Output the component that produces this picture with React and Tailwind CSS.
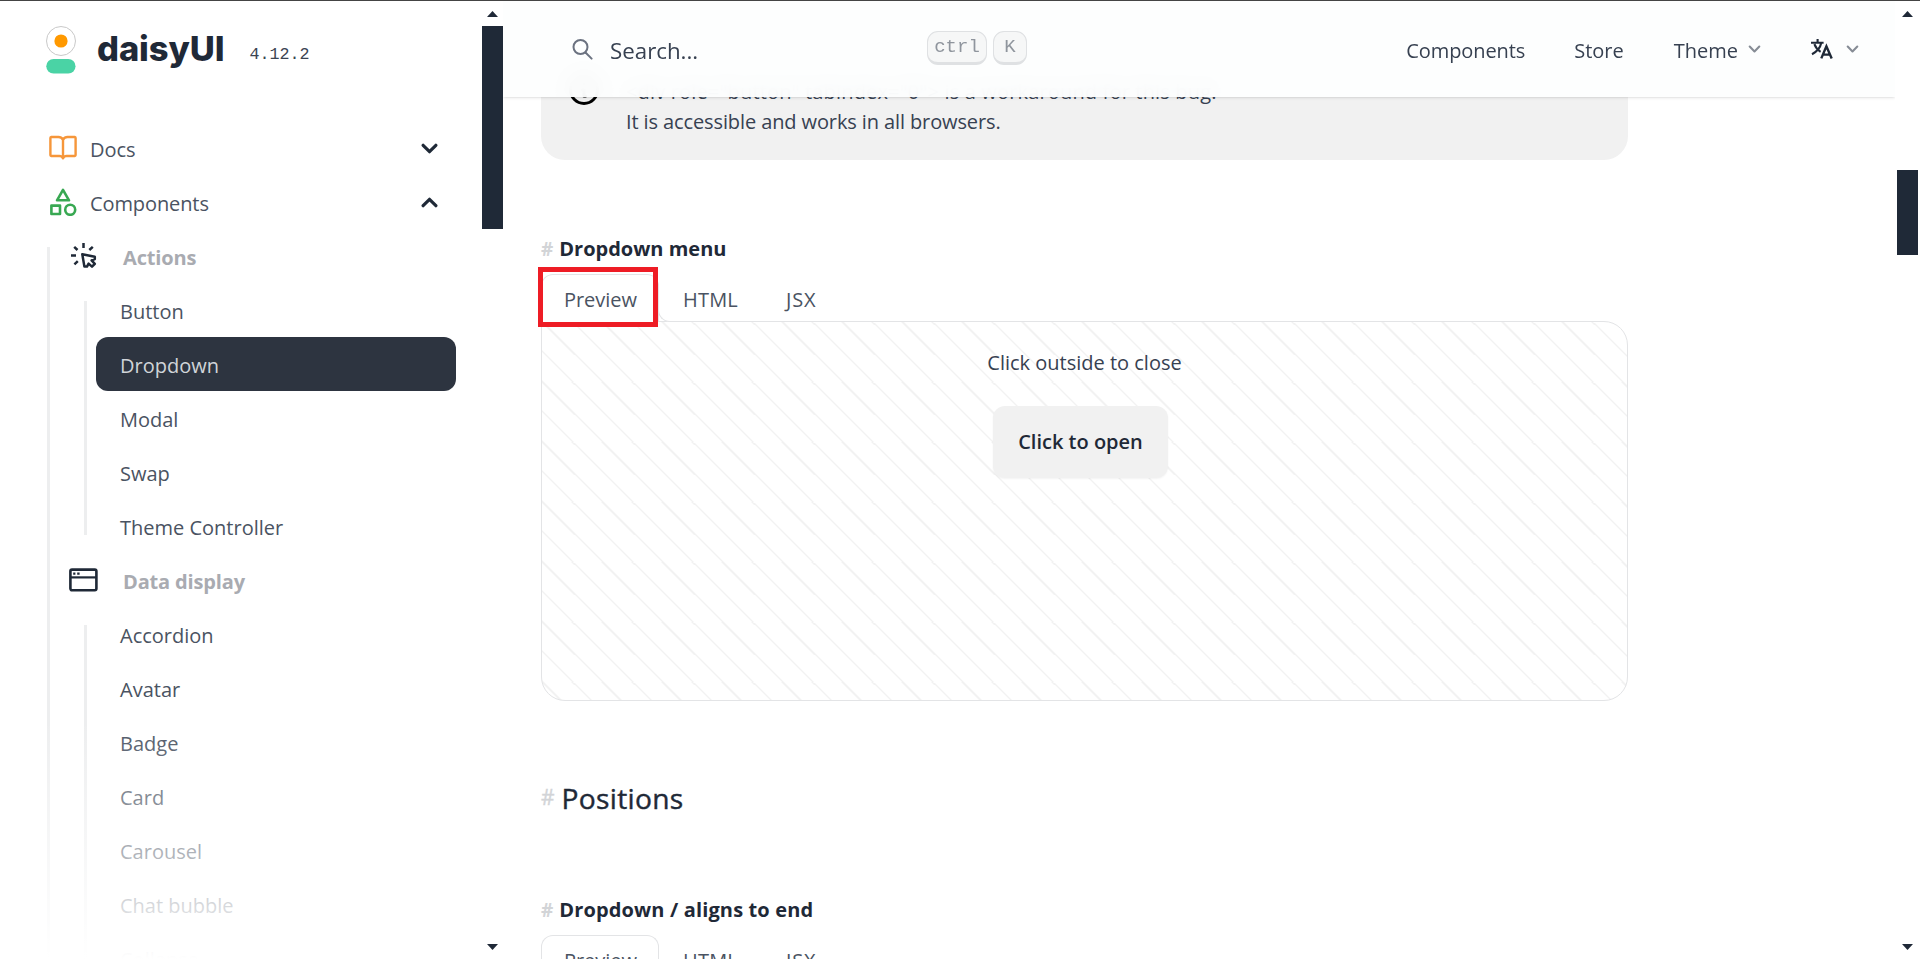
import React from "react";

function Chevron({ className, flip = false }) {
  return (
    <svg className={className} viewBox="0 0 16 10" fill="none" stroke="currentColor" strokeLinecap="round" strokeLinejoin="round">
      <path d={flip ? "M2 8L8 2L14 8" : "M2 2L8 8L14 2"} />
    </svg>
  );
}

function ScrollColumn({ width, thumb }) {
  return (
    <div className={`relative flex shrink-0 flex-col items-center ${width}`}>
      <svg className="mt-[10px] h-[6px] w-[11px] shrink-0" viewBox="0 0 11 6" fill="#1f2937">
        <path d="M5.5 0L11 6H0Z" />
      </svg>
      <div className={`w-[21px] shrink-0 bg-[#1f2937] ${thumb}`} />
      <svg className="mt-auto mb-[9px] h-[6px] w-[11px] shrink-0" viewBox="0 0 11 6" fill="#1f2937">
        <path d="M0 0H11L5.5 6Z" />
      </svg>
    </div>
  );
}

function Logo() {
  return (
    <svg className="h-[50px] w-[32px] shrink-0" viewBox="0 0 32 50">
      <circle cx="16" cy="16" r="14.5" fill="#fff" stroke="#c9c9c9" strokeWidth="1" />
      <circle cx="16" cy="16" r="6.6" fill="#ff9900" />
      <rect x="1.3" y="34" width="29.2" height="14.5" rx="7.25" fill="#4ad3a5" />
    </svg>
  );
}

function BookIcon() {
  return (
    <svg className="h-[26px] w-[28px]" viewBox="0 0 28 26" fill="none" stroke="#f6963a" strokeWidth="2.4" strokeLinecap="round" strokeLinejoin="round">
      <path d="M14 4.5C13 3 11.5 2 9.5 2H2.2A.9.9 0 0 0 1.4 2.9V20.2A.9.9 0 0 0 2.2 21H10.5C12.2 21 13.4 21.8 14 23.2C14.6 21.8 15.8 21 17.5 21H25.8A.9.9 0 0 0 26.6 20.2V2.9A.9.9 0 0 0 25.8 2H18.5C16.5 2 15 3 14 4.5Z" />
      <path d="M14 4.5V23" />
    </svg>
  );
}

function ShapesIcon() {
  return (
    <svg className="h-[28px] w-[28px]" viewBox="0 0 28 28" fill="none" stroke="#38a852" strokeWidth="2.6" strokeLinejoin="round">
      <path d="M14 1.8L20 12.3H8Z" />
      <rect x="2.4" y="17.6" width="8.6" height="8.4" />
      <circle cx="21.2" cy="21.8" r="5" />
    </svg>
  );
}

function ClickIcon() {
  return (
    <svg className="h-[27px] w-[27px]" viewBox="0 0 27 27" fill="none" stroke="#1f2937" strokeWidth="2.5" strokeLinejoin="round">
      <path d="M13.5 1V6M4.2 4.8L7.5 8M22.8 4.8L19.3 8M1 13.6H6M4.4 22.4L7.8 19.2" />
      <path d="M12.3 12.3L24.8 14.8V17L21.6 18.4L24.8 21.8L22 24.7L18.6 21.6L17 24.6H14.4Z" />
    </svg>
  );
}

function WindowIcon() {
  return (
    <svg className="h-[24px] w-[29px]" viewBox="0 0 29 24" fill="none" stroke="#1f2937">
      <rect x="1.4" y="1.6" width="26" height="20.6" rx="1.6" strokeWidth="2.6" />
      <path d="M1.4 9.4H27.4" strokeWidth="2.2" />
      <path d="M4.2 5.6H6.4M8.2 5.6H10.6" strokeWidth="2.2" />
    </svg>
  );
}

function TranslateIcon() {
  return (
    <svg className="h-[20px] w-[22px]" viewBox="0 0 22 20" fill="none" stroke="#1f2937" strokeWidth="2.1">
      <path d="M0 3.8H12.6M6.6 0V3.8M10.3 3.8C9.4 8.2 6 12.6 1 15.2M3.4 5.2C4.6 8.6 6.6 11 9.6 12.8" />
      <path d="M10.3 19.4L15.4 7.2L20.7 19.4M12 15.6H19" strokeWidth="2.4" />
    </svg>
  );
}

function MenuItem({ label, active = false }) {
  return (
    <li
      className={`flex h-[54px] items-center rounded-[12px] pt-[4px] pl-[24px] text-[20px] ${
        active ? "bg-[#2d3440] text-[#d0d4d9]" : "text-[#4a5362]"
      }`}
    >
      {label}
    </li>
  );
}

function MenuGroup({ icon, title, items, active }) {
  return (
    <li>
      <div className="flex h-[54px] items-center pl-[20px]">
        <span className="flex w-[30px] justify-center pb-[1px]">{icon}</span>
        <span className="pt-[4px] pl-[25px] text-[20px] font-bold tracking-[-0.15px] text-[#a9abb1]">{title}</span>
      </div>
      <div className="flex pl-[36px]">
        <div className="my-[18px] w-[3px] bg-[#1f2937]/8" />
        <ul className="ml-[9px] w-[360px]">
          {items.map((item) => (
            <MenuItem key={item} label={item} active={item === active} />
          ))}
        </ul>
      </div>
    </li>
  );
}

function Sidebar() {
  return (
    <aside className="relative h-full w-[482px] shrink-0 overflow-hidden">
      <div className="flex h-[120px] pt-[24px] pl-[45px]">
        <Logo />
        <span className="mt-[-1px] ml-[20px] font-['Inter',sans-serif] text-[34.5px] leading-[50px] font-extrabold tracking-[-0.1px] text-[#1f2937]">
          daisyUI
        </span>
        <span className="mt-[19px] ml-[25px] font-['Liberation_Mono',monospace] text-[16.7px] leading-[22px] text-[#3b4452]">4.12.2</span>
      </div>
      <div className="flex h-[54px] items-center pr-[44px] pl-[49px] text-[20px] text-[#4a5362]">
        <BookIcon />
        <span className="grow pt-[3px] pl-[13px]">Docs</span>
        <Chevron className="h-[11px] w-[17px] stroke-[3px] text-[#1f2937]" />
      </div>
      <div className="flex h-[54px] items-center pr-[44px] pl-[49px] text-[20px] text-[#4a5362]">
        <ShapesIcon />
        <span className="grow pt-[3px] pl-[13px] tracking-[-0.1px]">Components</span>
        <Chevron flip className="h-[11px] w-[17px] stroke-[3px] text-[#1f2937]" />
      </div>
      <div className="flex pl-[48px]">
        <div className="mt-[18px] -ml-[1px] w-[3px] bg-[#1f2937]/8" />
        <ul className="-ml-[2px]">
          <MenuGroup
            icon={<ClickIcon />}
            title="Actions"
            active="Dropdown"
            items={["Button", "Dropdown", "Modal", "Swap", "Theme Controller"]}
          />
          <MenuGroup
            icon={<WindowIcon />}
            title="Data display"
            items={["Accordion", "Avatar", "Badge", "Card", "Carousel", "Chat bubble", "Collapse"]}
          />
        </ul>
      </div>
      <div className="absolute inset-x-0 bottom-0 h-[240px] bg-linear-to-b from-white/0 to-white" />
    </aside>
  );
}

function Header() {
  return (
    <header className="absolute inset-x-0 top-0 z-10 flex h-[96px] items-center bg-[#fdfefe]/95 text-[#374151] shadow-sm backdrop-blur-sm">
      <svg className="ml-[69px] h-[21px] w-[21px]" viewBox="0 0 21 21" fill="none" stroke="#6b7280" strokeWidth="2" strokeLinecap="round">
        <circle cx="8.5" cy="8" r="7" />
        <path d="M13.5 13.5L19.6 19.6" />
      </svg>
      <span className="w-[334px] pt-[3px] pl-[17px] text-[22.3px] leading-[30px]">Search...</span>
      <div className="flex gap-[6px] pb-[2px] font-['Liberation_Mono',monospace] text-[19px] leading-[31px] text-[#8f959d]">
        <kbd className="flex h-[34px] w-[60px] justify-center rounded-[11px] border border-b-[3px] border-[#dfe1e3] bg-[#f6f7f7]">ctrl</kbd>
        <kbd className="flex h-[34px] w-[34px] justify-center rounded-[11px] border border-b-[3px] border-[#dfe1e3] bg-[#f6f7f7]">K</kbd>
      </div>
      <nav className="ml-auto flex items-center pr-[36px] text-[20px]">
        <span className="pt-[3px] tracking-[-0.1px]">Components</span>
        <span className="ml-[49px] pt-[3px]">Store</span>
        <span className="ml-[50px] pt-[3px]">Theme</span>
        <Chevron className="ml-[10px] h-[8px] w-[13px] stroke-[2.6px] text-[#868c95]" />
        <span className="ml-[50px]"><TranslateIcon /></span>
        <Chevron className="ml-[13px] h-[8px] w-[13px] stroke-[2.6px] text-[#868c95]" />
      </nav>
    </header>
  );
}

function Heading({ children }) {
  return (
    <h3 className="flex h-[30px] items-center gap-[6px] text-[20px] font-bold text-[#1f2937]">
      <span className="text-[19px] text-[#d2d4d7]">#</span>
      {children}
    </h3>
  );
}

function Tabs({ highlighted = false }) {
  return (
    <div className="relative z-1 -mb-px flex h-[48px] text-[20px] text-[#4a5362]">
      <div className="relative flex w-[118px] items-center justify-center rounded-t-[12px] border border-b-0 border-[#e3e4e6] bg-white pt-[2px] pl-[1px]">
        Preview
        {highlighted && <div className="absolute -top-[8px] -left-[4px] h-[60px] w-[120px] border-[5px] border-[#ee1c25]" />}
        <div className="absolute -right-[13px] bottom-0 h-[13px] w-[13px] rounded-bl-[12px] border-b border-l border-[#e3e4e6] bg-white" />
      </div>
      <div className="flex items-center pt-[3px] pl-[24px] tracking-[0.2px]">HTML</div>
      <div className="flex items-center pt-[3px] pl-[48px] tracking-[0.8px]">JSX</div>
    </div>
  );
}

function Alert() {
  return (
    <div className="flex h-[159px] items-end rounded-b-[24px] bg-[#f1f1f1] pl-[25px] text-[#374151]">
      <svg className="mb-[52px] h-[36px] w-[36px]" viewBox="0 0 24 24" fill="none" stroke="#000" strokeWidth="2" strokeLinecap="round" strokeLinejoin="round">
        <path d="M13 16h-1v-4h-1m1-4h.01M21 12a9 9 0 11-18 0 9 9 0 0118 0z" />
      </svg>
      <div className="mb-[23px] pl-[24px] text-[20px] leading-[30px]">
        <p className="tracking-[0.16px]">&lt;div role="button" tabindex="0"&gt; is a workaround for this bug.</p>
        <p className="tracking-[-0.11px]">It is accessible and works in all browsers.</p>
      </div>
    </div>
  );
}

function Content() {
  return (
    <div className="w-[1125px] pl-[38px]">
      <Alert />
      <div className="pt-[74px]">
        <Heading>Dropdown menu</Heading>
      </div>
      <div className="pt-[10px]">
        <Tabs highlighted />
        <div className="flex h-[380px] flex-col items-center rounded-[24px] rounded-tl-none border border-[#e3e4e6] bg-[repeating-linear-gradient(45deg,#ffffff,#ffffff_19.5px,#f2f2f2_19.5px,#f2f2f2_21px)] bg-[length:60px_60px] bg-top">
          <p className="mt-[26px] text-[20px] leading-[30px] text-[#374151]">Click outside to close</p>
          <button className="mt-[28px] mr-[8px] h-[72px] w-[175px] rounded-[12px] bg-[#f1f1f1] text-[20px] font-semibold text-[#1f2937] shadow-xs">
            Click to open
          </button>
        </div>
      </div>
      <h2 className="mt-[77px] flex h-[40px] items-center gap-[7px] text-[28.2px] font-medium text-[#1f2937] [-webkit-text-stroke:0.4px]">
        <span className="text-[21px] text-[#d2d4d7]">#</span>
        <span className="tracking-[0.3px]">Positions</span>
      </h2>
      <div className="pt-[77px]">
        <Heading>
          <span className="tracking-[0.14px]">Dropdown / aligns to end</span>
        </Heading>
      </div>
      <div className="pt-[10px]">
        <Tabs />
      </div>
    </div>
  );
}

export default function App() {
  return (
    <div className="flex h-[959px] w-[1920px] overflow-hidden border-t border-[#444444] bg-white font-['Open_Sans',sans-serif] text-[#1f2937]">
      <Sidebar />
      <ScrollColumn width="w-[21px]" thumb="mt-[9px] h-[203px]" />
      <main className="relative h-full w-[1392px] shrink-0 overflow-hidden">
        <Header />
        <Content />
      </main>
      <ScrollColumn width="w-[25px]" thumb="mt-[153px] h-[85px]" />
    </div>
  );
}
